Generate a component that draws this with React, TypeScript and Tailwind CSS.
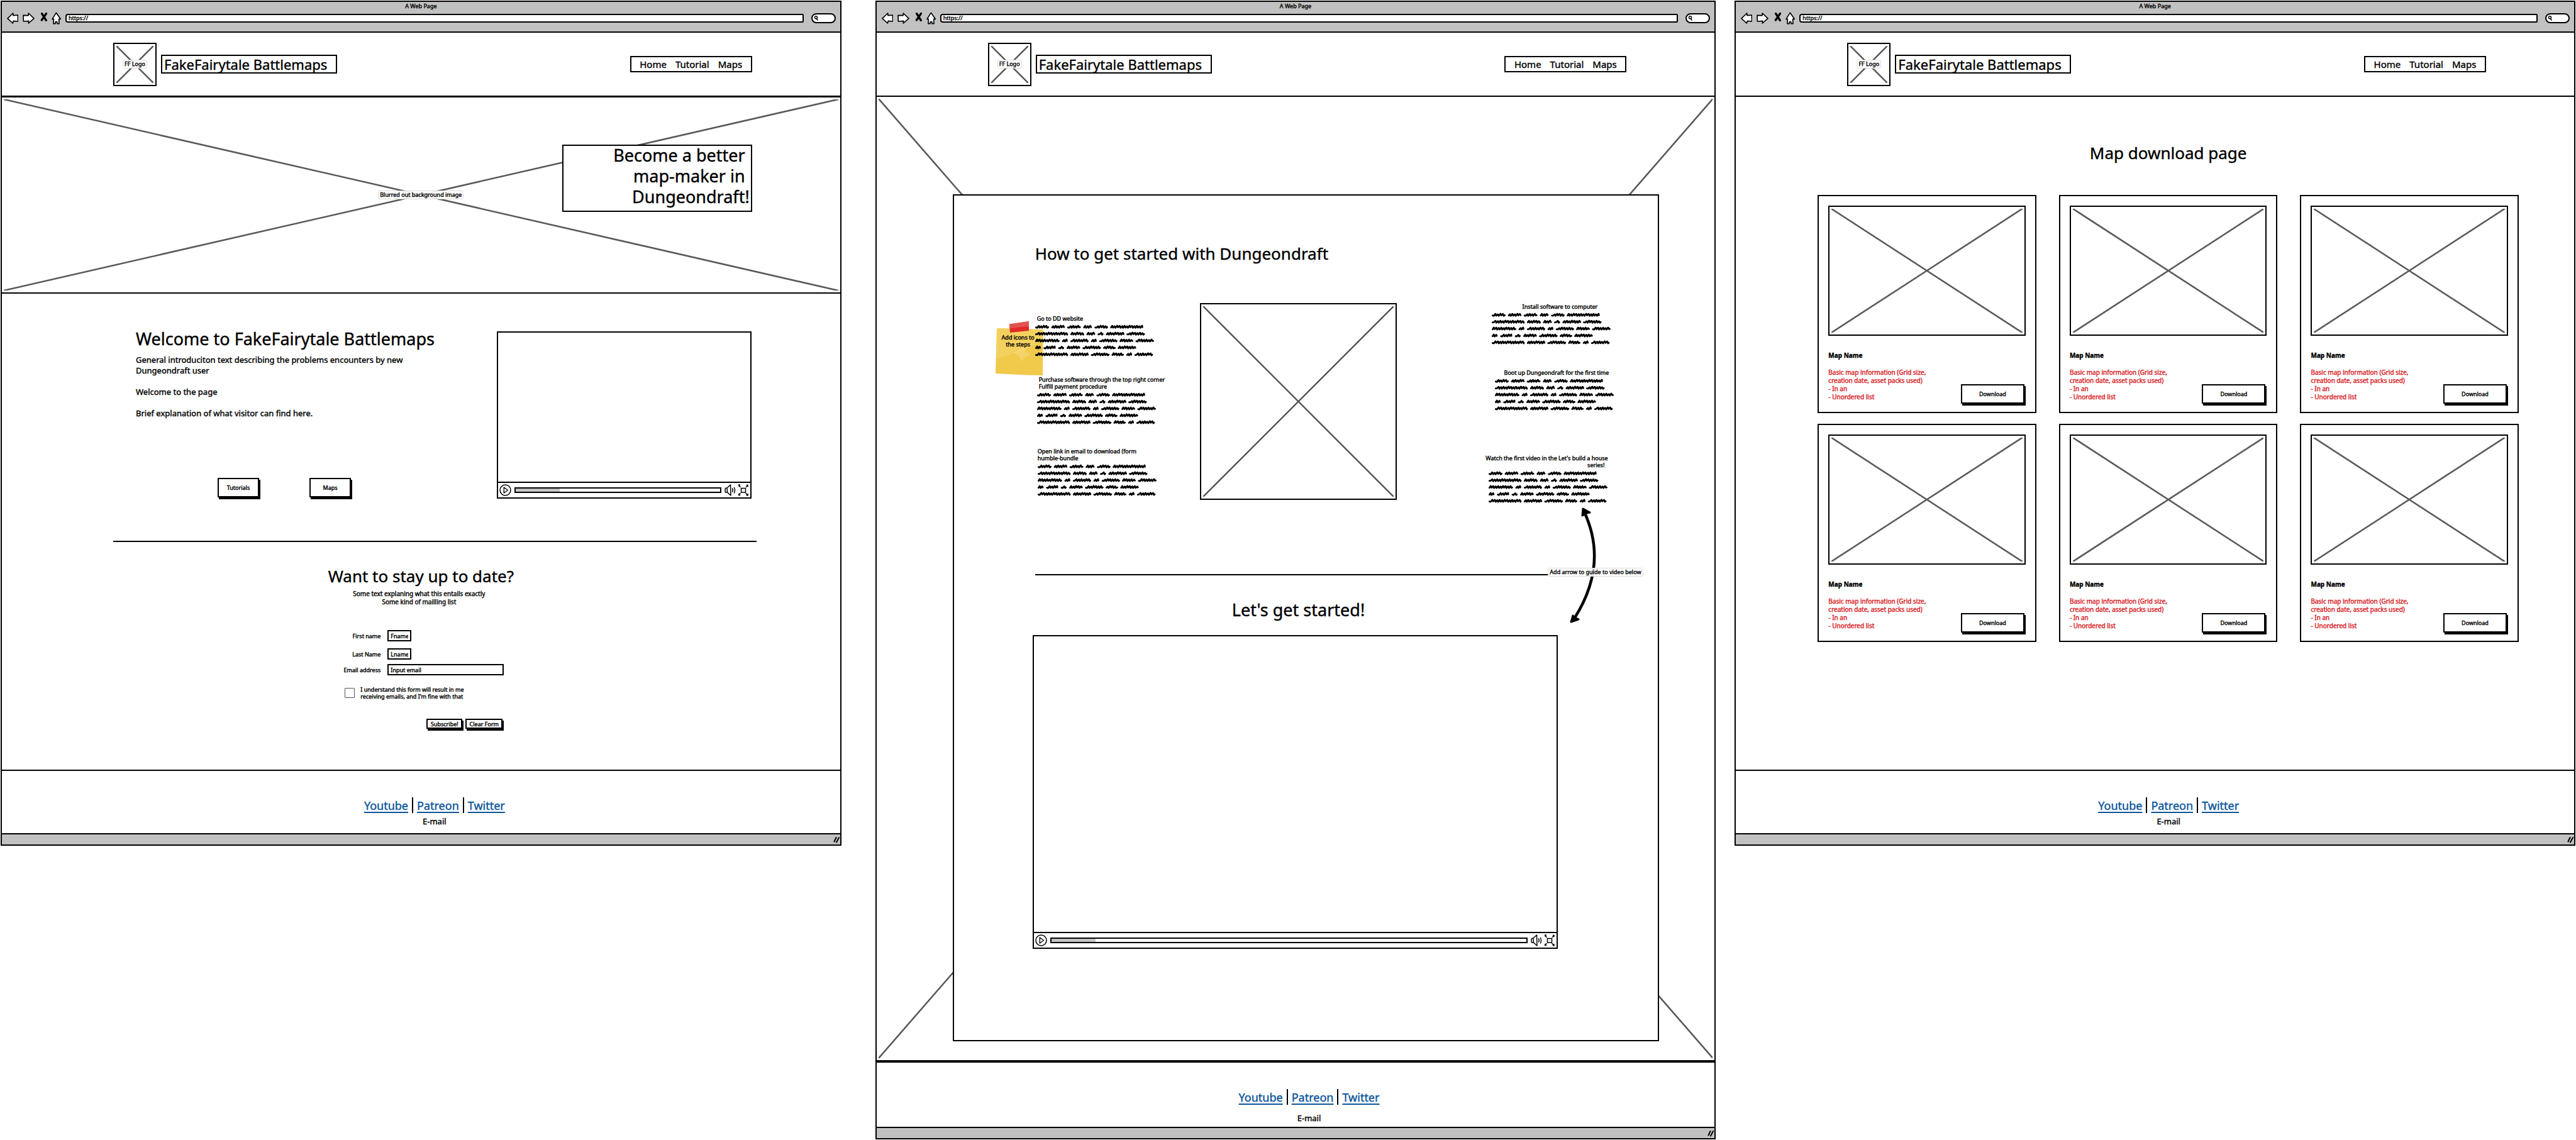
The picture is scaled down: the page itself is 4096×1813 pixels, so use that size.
import React, { useId } from "react";

const SHADOW_BUTTON =
  "flex items-center justify-center border-2 border-black bg-white text-[9px] leading-[11px] shadow-[2px_3px_0_0_#000]";

function Cross() {
  return (
    <svg className="absolute inset-0 h-full w-full p-[3px]" aria-hidden="true">
      <svg className="overflow-visible" width="100%" height="100%">
        <line x1="0" y1="0" x2="100%" y2="100%" stroke="#595959" strokeWidth="2.6" strokeLinecap="round" />
        <line x1="100%" y1="0" x2="0" y2="100%" stroke="#595959" strokeWidth="2.6" strokeLinecap="round" />
      </svg>
    </svg>
  );
}

function ImageBox({ className, label }: { className: string; label?: string }) {
  return (
    <div className={`relative flex items-center justify-center border-2 border-black bg-white ${className}`}>
      <Cross />
      {label ? <Tag>{label}</Tag> : null}
    </div>
  );
}

function Tag({ children }: { children: React.ReactNode }) {
  return (
    <span className="relative block whitespace-nowrap rounded-[3px] border border-[#dcdcdc] bg-white/90 px-[2px] text-[9px] leading-[12px]">
      {children}
    </span>
  );
}

function Chrome() {
  return (
    <div className="flex h-[49px] flex-col border-b-2 border-black bg-[#c1c1c1]">
      <div className="text-center text-[9px] leading-[13px]">A Web Page</div>
      <div className="flex h-[25px] items-center gap-[7px] pl-2 pr-[7px]">
        <button type="button" aria-label="Back">
          <svg className="block" width="18" height="18" viewBox="0 0 54 54" aria-hidden="true">
            <path d="M3 28L29 3L30 14L52 12L53 42L31 40L28 51Z" fill="#fff" stroke="#000" strokeWidth="5" strokeLinejoin="round" />
          </svg>
        </button>
        <button type="button" aria-label="Forward">
          <svg className="block" width="19" height="18" viewBox="0 0 57 54" aria-hidden="true">
            <path d="M3 13L27 14L28 3L54 28L28 51L29 40L4 42Z" fill="#fff" stroke="#000" strokeWidth="5" strokeLinejoin="round" />
          </svg>
        </button>
        <button type="button" aria-label="Stop" className="pb-1">
          <svg className="block" width="13" height="14" viewBox="0 0 39 42" aria-hidden="true">
            <path d="M14 5L34 37M35 4L13 36" fill="none" stroke="#000" strokeWidth="10" strokeLinecap="round" />
          </svg>
        </button>
        <button type="button" aria-label="Home">
          <svg className="block" width="15" height="20" viewBox="0 0 45 60" aria-hidden="true">
            <path d="M22 4L43 34L35 34L36 56L27 56L26 47L19 47L18 56L9 56L10 34L3 34Z" fill="#fff" stroke="#000" strokeWidth="5" strokeLinejoin="round" />
          </svg>
        </button>
        <input
          aria-label="Address"
          defaultValue="https://"
          className="h-[14px] min-w-0 flex-1 rounded-l-[4px] rounded-r-[2px] border-2 border-black bg-white px-[3px] text-[9px] leading-[10px]"
        />
        <div className="relative ml-[5px] flex h-4 w-[39px] shrink-0">
          <input aria-label="Search" className="h-4 w-full rounded-[8px] border-2 border-black bg-white pl-3 pr-1 text-[9px]" />
          <svg className="absolute left-[4px] top-[4px]" width="7" height="8" viewBox="0 0 14 16" aria-hidden="true">
            <circle cx="7" cy="5.5" r="4" fill="none" stroke="#000" strokeWidth="3" />
            <path d="M9 9L12 14" stroke="#000" strokeWidth="3" strokeLinecap="round" />
          </svg>
        </div>
      </div>
    </div>
  );
}

function SiteHeader() {
  return (
    <header className="flex h-[102px] items-center justify-between border-b-2 border-black pl-[177px] pr-[140px]">
      <div className="flex items-center gap-[7px]">
        <ImageBox className="h-[69px] w-[69px]" label="FF Logo" />
        <div className="w-[280px] border-2 border-black pl-[3px] text-[22px] leading-[26px]">FakeFairytale Battlemaps</div>
      </div>
      <nav className="flex w-[194px] justify-center gap-[14px] border-2 border-black text-[15px] leading-[22px]">
        <a href="#home">Home</a>
        <a href="#tutorial">Tutorial</a>
        <a href="#maps">Maps</a>
      </nav>
    </header>
  );
}

function SiteFooter({ emailClass }: { emailClass: string }) {
  return (
    <footer className="flex flex-col items-center border-t-2 border-black pl-[43px] pt-[42px]">
      <div className="flex h-[25px] items-center text-[18px] leading-[24px] text-[#0b559b]">
        <a className="underline decoration-2 underline-offset-[3px]" href="#youtube">
          Youtube
        </a>
        <span className="mx-[6px] h-full w-[2px] bg-black" />
        <a className="underline decoration-2 underline-offset-[3px]" href="#patreon">
          Patreon
        </a>
        <span className="mx-[6px] h-full w-[2px] bg-black" />
        <a className="underline decoration-2 underline-offset-[3px]" href="#twitter">
          Twitter
        </a>
      </div>
      <p className={`text-[13px] leading-[18px] ${emailClass}`}>E-mail</p>
    </footer>
  );
}

function Browser({ children, emailClass }: { children: React.ReactNode; emailClass: string }) {
  return (
    <article className="min-w-0 flex-1 border-2 border-black bg-white">
      <Chrome />
      <SiteHeader />
      {children}
      <SiteFooter emailClass={emailClass} />
      <div className="flex h-[18px] items-center justify-end border-t-2 border-black bg-[#c1c1c1] pr-px">
        <svg width="10" height="12" viewBox="0 0 20 24" aria-hidden="true">
          <path d="M3 19L9 6M10 21L18 6" stroke="#000" strokeWidth="4" strokeLinecap="round" />
        </svg>
      </div>
    </article>
  );
}

function Video({ className }: { className: string }) {
  return (
    <div className={`flex flex-col border-2 border-black bg-white ${className}`}>
      <div className="flex-1" />
      <div className="flex h-[25px] items-center border-t-2 border-black pl-[2px] pr-[3px]">
        <button type="button" aria-label="Play">
          <svg className="block" width="19" height="19" viewBox="0 0 38 38" aria-hidden="true">
            <circle cx="19" cy="19" r="17" fill="#fff" stroke="#000" strokeWidth="3" />
            <path d="M14.500 10L27 19L14.500 28Z" fill="none" stroke="#000" strokeWidth="2.6" strokeLinejoin="round" />
          </svg>
        </button>
        <input
          type="range"
          aria-label="Seek"
          defaultValue="22"
          className="mx-[5px] h-[9px] min-w-0 flex-1 appearance-none border-2 border-black bg-[linear-gradient(to_right,#c4c4c4_70px,#fff_70px)] [&::-webkit-slider-thumb]:w-0 [&::-webkit-slider-thumb]:appearance-none"
        />
        <button type="button" aria-label="Volume">
          <svg className="block" width="18" height="19" viewBox="0 0 36 38" fill="none" stroke="#000" strokeWidth="3" strokeLinejoin="round" strokeLinecap="round" aria-hidden="true">
            <path d="M3 13L8 12L19 2L20 36L9 26L3 26Q1 19 3 13M8 12L9 26M25 14Q28 19 25 24M31 11Q35 19 31 28" />
          </svg>
        </button>
        <button type="button" aria-label="Full screen" className="ml-[4px]">
          <svg className="block" width="16" height="19" viewBox="0 0 32 38" fill="none" stroke="#000" strokeWidth="3" strokeLinejoin="round" strokeLinecap="round" aria-hidden="true">
            <path d="M9 13H23V26H9ZM6 9L1 2M2 6V2H5M25 9L30 3M27 3H30V7M6 29L1 35M1 31V35H5M24 29L30 36M30 31V36H27" />
          </svg>
        </button>
      </div>
    </div>
  );
}

// Placeholder paragraph: one list of [start, end] word spans per line.
const SCRIBBLE_LINES: [number, number][][] = [
  [[0, 95], [110, 203], [218, 312], [328, 388], [405, 498], [512, 738]],
  [[0, 225], [240, 335], [350, 410], [426, 467], [483, 610], [623, 750]],
  [[0, 167], [183, 223], [240, 365], [381, 421], [437, 562], [576, 670], [685, 812]],
  [[0, 40], [57, 140], [157, 198], [215, 308], [323, 450], [464, 550], [564, 690]],
  [[0, 225], [240, 366], [380, 508], [522, 606], [622, 662], [678, 805]],
];

function scribblePath() {
  const wobble = [7, -6, 6, -3, 7, -7, 4, -6, 7, -4];
  let k = 0;
  return SCRIBBLE_LINES.map((line, row) => {
    const y = 24 + row * 47;
    return line
      .map(([from, to]) => {
        let d = `M${from + 6} ${y + 5}`;
        for (let x = from + 14; x < to - 6; x += k % 2 ? 11 : 6) {
          d += `L${x} ${y + wobble[k % wobble.length]}`;
          k += 1;
        }
        return `${d}L${to - 6} ${y + 3}`;
      })
      .join("");
  }).join("");
}

const SCRIBBLE = scribblePath();

function Scribble({ className = "" }: { className?: string }) {
  return (
    <svg className={`relative mt-0.5 block h-[55px] w-[189px] ${className}`} viewBox="0 0 812 236" aria-hidden="true">
      <path d={SCRIBBLE} fill="none" stroke="#000" strokeWidth="12" strokeLinecap="round" strokeLinejoin="round" />
    </svg>
  );
}

function StickyNote() {
  return (
    <div className="absolute -left-[64px] top-[29px] h-[87px] w-[78px]">
      <svg className="absolute inset-0 h-full w-full" viewBox="0 0 78 87" aria-hidden="true">
        <path d="M3 11L77 13L76 86L50 85.500L1 83Z" fill="#f1c94b" />
        <path d="M3 11L77 13L77 30Q60 42 34 50L2 60Z" fill="#f4d365" opacity="0.75" />
        <path d="M30 50L50 38L48 48L57 52L46 58L42 65L39 56Z" fill="#f6da7c" opacity="0.6" />
        <path d="M23 4.500L54 0V15L24 18Z" fill="#df2b27" />
        <path d="M23 4.500L54 0V8L23 11Z" fill="#e2534d" />
      </svg>
      <p className="relative pr-1 pt-[20px] text-center text-[9px] leading-[11px]">
        Add icons to
        <br />
        the steps
      </p>
    </div>
  );
}

function Step({ lines, className = "", captionClass, scribbleClass }: { lines: string[]; className?: string; captionClass: string; scribbleClass?: string }) {
  return (
    <div className={className}>
      <p className={`relative whitespace-nowrap text-[9px] leading-[11px] ${captionClass}`}>
        {lines.map((line) => (
          <span key={line} className="block">
            {line}
          </span>
        ))}
      </p>
      <Scribble className={scribbleClass} />
    </div>
  );
}

function Field({ label, value, className, inputClass }: { label: string; value: string; className: string; inputClass: string }) {
  const id = useId();
  return (
    <div className={`flex items-center gap-[11px] ${className}`}>
      <label htmlFor={id} className="w-[60px] whitespace-nowrap text-right">
        {label}
      </label>
      <input id={id} defaultValue={value} className={`h-[18px] border-2 border-black bg-white px-[3px] ${inputClass}`} />
    </div>
  );
}

function HomePage() {
  const consent = useId();
  return (
    <main>
      <section className="relative flex h-[313px] items-center justify-center border-b-2 border-t border-black">
        <Cross />
        <Tag>Blurred out background image</Tag>
        <h1 className="absolute right-[140px] top-[75px] flex h-[107px] w-[302px] items-center justify-end whitespace-pre border-2 border-black bg-white pb-2 pr-[2px] text-right text-[27px] leading-[33px]">
          {"Become a better \nmap-maker in \nDungeondraft!"}
        </h1>
      </section>

      <section className="flex justify-between pl-[213px] pr-[141px] pt-[54px]">
        <div>
          <h2 className="text-[27px] leading-[36px]">Welcome to FakeFairytale Battlemaps</h2>
          <p className="mt-[7px] whitespace-pre-line text-[13px] leading-[17px]">
            {"General introduciton text describing the problems encounters by new\nDungeondraft user\n\nWelcome to the page\n\nBrief explanation of what visitor can find here."}
          </p>
          <div className="mt-[94px] flex gap-20 pl-[130px]">
            <button type="button" className={`${SHADOW_BUTTON} h-[31px] w-[66px]`}>
              Tutorials
            </button>
            <button type="button" className={`${SHADOW_BUTTON} h-[31px] w-[66px]`}>
              Maps
            </button>
          </div>
        </div>
        <Video className="mt-1.5 h-[266px] w-[405px]" />
      </section>

      <hr className="ml-[177px] mr-[133px] mt-[67px] border-t-2 border-black" />

      <section className="pb-[65px] pt-9">
        <h2 className="text-center text-[26px] leading-[36px]">Want to stay up to date?</h2>
        <p className="mt-1 pr-1.5 text-center text-[10px] leading-[13px]">
          Some text explaning what this entails exactly
          <br />
          Some kind of mailling list
        </p>
        <form className="mx-auto mt-[38px] w-[264px] pl-2 text-[9px] leading-[11px]">
          <Field label="First name" value="Fname" className="" inputClass="w-[38px]" />
          <Field label="Last Name" value="Lname" className="mt-[11px]" inputClass="w-[38px]" />
          <Field label="Email address" value="Input email" className="mt-[7px]" inputClass="min-w-0 flex-1" />
          <div className="mt-[17px] flex items-center gap-[9px] pl-[3px]">
            <input id={consent} type="checkbox" className="h-4 w-4 shrink-0 appearance-none rounded-[1px] border border-[#555]" />
            <label htmlFor={consent} className="whitespace-nowrap">
              I understand this form will result in me
              <br />
              receiving emails, and I'm fine with that
            </label>
          </div>
          <div className="mt-[30px] flex justify-end gap-[5px] pr-[2px]">
            <button type="submit" className={`${SHADOW_BUTTON} h-4 w-[57px]`}>
              Subscribe!
            </button>
            <button type="reset" className={`${SHADOW_BUTTON} h-4 w-[59px]`}>
              Clear Form
            </button>
          </div>
        </form>
      </section>
    </main>
  );
}

function TutorialPage() {
  return (
    <main className="relative border-b-2 border-black pb-[30px] pl-[121px] pr-[88px] pt-[155px]">
      <Cross />
      <section className="relative border-2 border-black bg-white pb-[145px] pt-[74px]">
        <h2 className="pl-[129px] text-[26px] leading-[36px]">How to get started with Dungeondraft</h2>

        <div className="mt-[61px] flex items-start pl-[129px] pr-[74px]">
          <div className="relative w-[262px] pt-[19px]">
            <StickyNote />
            <Step lines={["Go to DD website"]} captionClass="pl-[3px]" />
            <Step
              lines={["Purchase software through the top right corner", "Fulfill payment procedure"]}
              className="mt-[29px] pl-[3px]"
              captionClass="pl-[3px]"
            />
            <Step lines={["Open link in email to download (form", "humble-bundle"]} className="mt-[35px] pl-[4px]" captionClass="" />
          </div>
          <ImageBox className="h-[313px] w-[313px]" />
          <div className="ml-auto w-[200px] text-right">
            <Step lines={["Install software to computer"]} captionClass="pr-[22px]" scribbleClass="ml-[10px]" />
            <Step
              lines={["Boot up Dungeondraft for the first time"]}
              className="mt-[37px]"
              captionClass="pr-[4px]"
              scribbleClass="ml-[15px]"
            />
            <Step
              lines={["Watch the first video in the Let's build a house", "series!"]}
              className="mt-[68px]"
              captionClass="pr-[11px]"
              scribbleClass="ml-[5px]"
            />
          </div>
        </div>

        <div className="relative ml-[129px] mr-[171px] mt-[111px]">
          <hr className="border-t-2 border-black" />
          <svg className="absolute -top-[108px] left-full ml-[25px]" width="56" height="190" viewBox="0 0 56 190" aria-hidden="true">
            <path d="M29 9Q68 93 13 179" fill="none" stroke="#000" strokeWidth="4.5" />
            <path d="M27 4L38 10L33 11L26 15Z" fill="#000" stroke="#000" strokeWidth="3" strokeLinejoin="round" />
            <path d="M8 184L11 174L13 177L20 180Z" fill="#000" stroke="#000" strokeWidth="3" strokeLinejoin="round" />
          </svg>
          <div className="absolute -top-[10px] left-full -ml-1">
            <Tag>Add arrow to guide to video below</Tag>
          </div>
        </div>

        <div className="ml-[125px] mr-[159px] mt-[37px]">
          <h2 className="pl-[10px] text-center text-[27px] leading-[36px]">Let's get started!</h2>
          <Video className="mt-[22px] h-[499px]" />
        </div>
      </section>
    </main>
  );
}

function MapCard() {
  return (
    <li className="border-2 border-black px-[15px] pb-[13px] pt-[15px]">
      <ImageBox className="h-[207px] w-full" />
      <h3 className="mt-6 text-[10px] font-bold leading-[14px]">Map Name</h3>
      <div className="mt-[14px] flex items-end justify-between">
        <p className="whitespace-pre pb-1 text-[10px] leading-[13px] text-[#d9201f]">
          {"Basic map information (Grid size,\ncreation date, asset packs used)\n- In an\n- Unordered list"}
        </p>
        <button type="button" className={`${SHADOW_BUTTON} mr-[2px] h-[31px] w-[101px]`}>
          Download
        </button>
      </div>
    </li>
  );
}

function MapsPage() {
  return (
    <main className="pb-[203px] pl-[130px] pr-[88px] pt-[71px]">
      <h2 className="text-center text-[26px] leading-[36px]">Map download page</h2>
      <ul className="mt-[49px] grid grid-cols-3 gap-x-9 gap-y-[17px]">
        {[0, 1, 2, 3, 4, 5].map((card) => (
          <MapCard key={card} />
        ))}
      </ul>
    </main>
  );
}

export default function App() {
  return (
    <div className="flex items-start bg-white px-px pt-px font-['Noto_Sans',sans-serif] text-black [-webkit-text-stroke:0.4px]">
      <Browser emailClass="mt-1 pb-[10px]">
        <HomePage />
      </Browser>
      <div className="w-[54px]" />
      <Browser emailClass="mt-3 pb-[5px]">
        <TutorialPage />
      </Browser>
      <div className="w-[30px]" />
      <Browser emailClass="mt-1 pb-[10px]">
        <MapsPage />
      </Browser>
    </div>
  );
}
